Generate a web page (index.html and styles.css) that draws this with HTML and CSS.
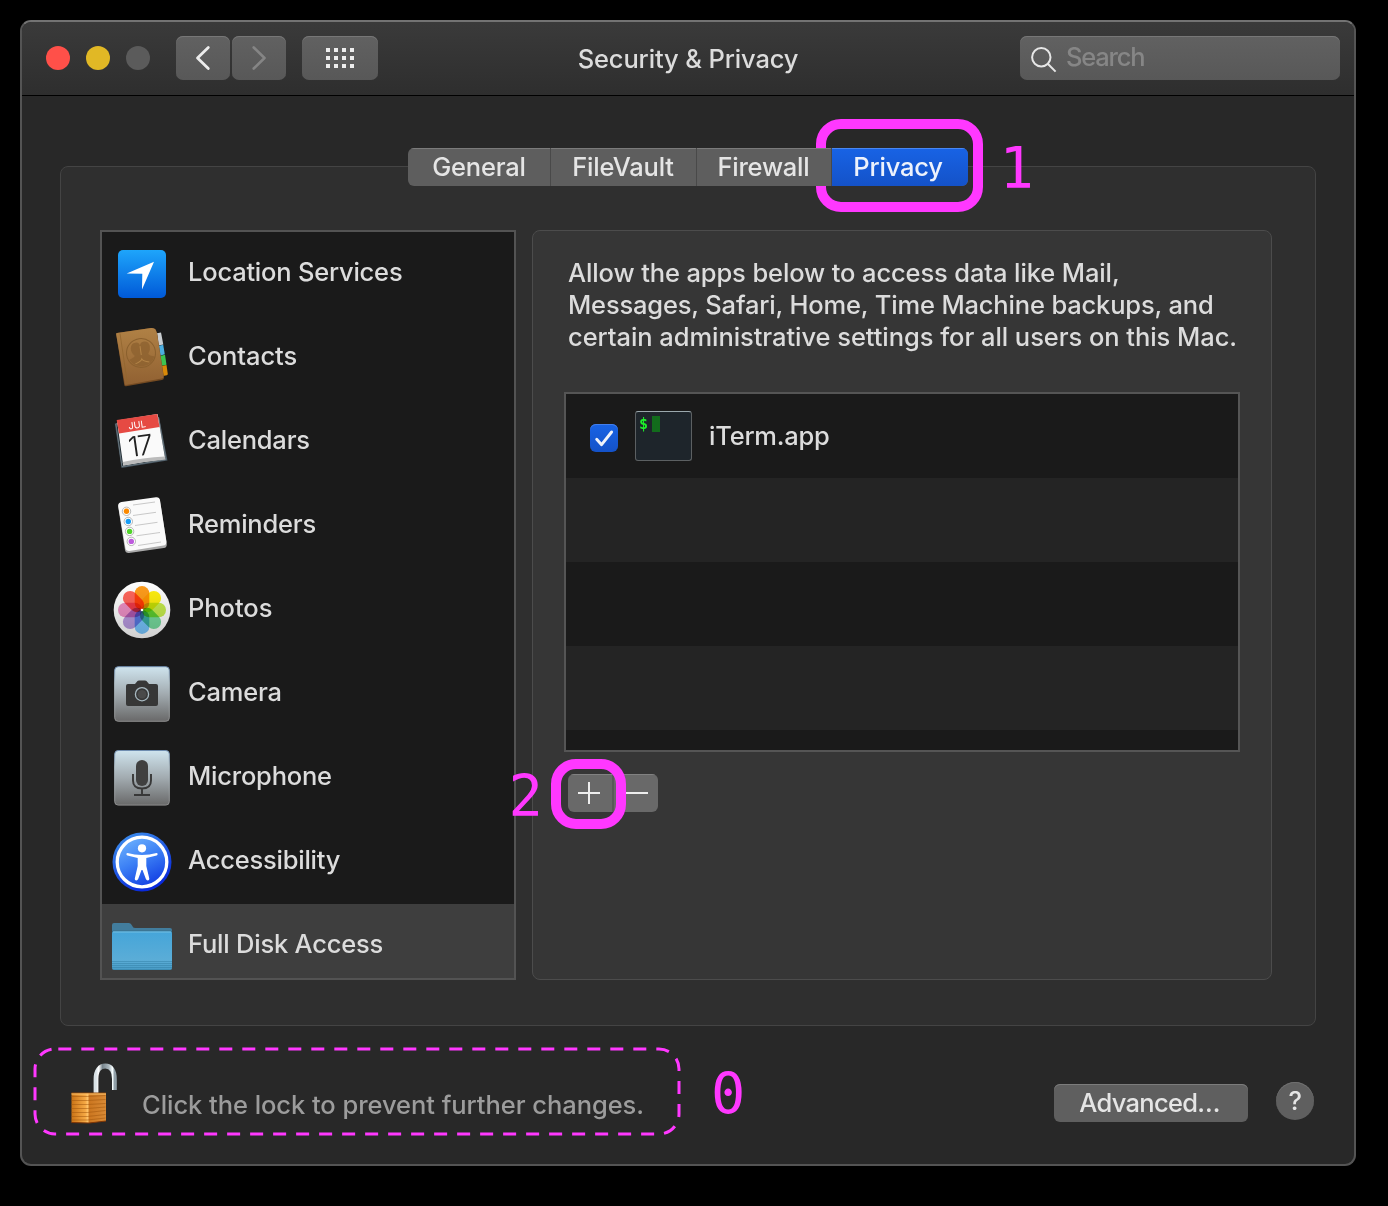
FILE: index.html
```html
<!DOCTYPE html>
<html lang="en">
<head>
<meta charset="utf-8">
<title>Security &amp; Privacy</title>
<link rel="stylesheet" href="styles.css">
</head>
<body>
<main class="window">
  <header class="toolbar">
    <div class="lights"><i class="light close"></i><i class="light minimize"></i><i class="light zoom"></i></div>
    <div class="nav">
      <button class="tool nav-button"><svg width="54" height="44" fill="none" stroke="#ececec" stroke-width="2.8" stroke-linecap="round" stroke-linejoin="round"><path d="M32.3 11.5 21.5 22l10.8 10.5"/></svg></button>
      <button class="tool nav-button"><svg width="54" height="44" fill="none" stroke="#858585" stroke-width="2.6" stroke-linecap="round" stroke-linejoin="round"><path d="M21.7 11.5 32.5 22 21.7 32.5"/></svg></button>
    </div>
    <button class="tool grid-button"><svg width="28" height="20" fill="#eee"><path d="M0 0h4v4H0zM8 0h4v4H8zM16 0h4v4h-4zM24 0h4v4h-4zM0 8h4v4H0zM8 8h4v4H8zM16 8h4v4h-4zM24 8h4v4h-4zM0 16h4v4H0zM8 16h4v4H8zM16 16h4v4h-4zM24 16h4v4h-4z"/></svg></button>
    <h1 class="title">Security &amp; Privacy</h1>
    <div class="tool search"><svg width="26" height="26" fill="none" stroke="#e6e6e6" stroke-width="2"><circle cx="10.3" cy="10.3" r="9.2"/><path d="M17 17l7.6 7.6"/></svg><span class="search-text">Search</span></div>
  </header>

  <section class="content">
    <nav class="tabs">
      <span class="tab general">General</span>
      <span class="tab filevault">FileVault</span>
      <span class="tab firewall">Firewall</span>
      <span class="tab privacy">Privacy</span>
    </nav>

    <div class="panel">
      <ul class="services">
        <li class="service">
          <svg class="icon" viewBox="0 0 60 60"><defs><linearGradient id="loc" x2="0" y2="1"><stop stop-color="#1ea5fb"/><stop offset="1" stop-color="#0059d8"/></linearGradient></defs><rect x="6" y="6" width="48" height="48" rx="5" fill="url(#loc)"/><path d="M42 17.7 14.7 29.4l15.6.4-.3 15.7z" fill="#fff"/></svg>
          <span class="label">Location Services</span></li>
        <li class="service">
          <svg class="icon" viewBox="0 0 60 60"><defs><linearGradient id="book" x2="0" y2="1"><stop stop-color="#b08145"/><stop offset="1" stop-color="#916132"/></linearGradient></defs><path d="M45 5.2 49 4.5l2.3 12-5 1z" fill="#c9cdd0"/><path d="M46 18l5.2-1.2 1.6 9.5-5 1.5z" fill="#4caee0"/><path d="M48 28l5-1.3 1.5 10-5 1z" fill="#3cc451"/><path d="M49.500 38l5-1L55.800 46q0 1-1 1.200L51 48z" fill="#d98908"/><path d="M5 5 39 .1q3.500-.4 4.800 1.700l1.200 3 7 44.700q0 2-2 2.500L14 58.200q-1.500.2-1.800-1.500L4.200 6.500Q4 5.200 5 5z" fill="#754b22"/><path d="M5 5 39 .1q3-.4 4.500 1.500l1.500 4 6.500 42.500q.2 2-2 2.500L14 57q-1 .2-1.300-1.500L4.200 6.500Q4 5.200 5 5z" fill="url(#book)"/><path d="M8 5.500 15.500 56" stroke="#92662f" stroke-width=".8"/><g transform="rotate(-8 29 25)" fill="#8d6130"><circle cx="29" cy="25" r="14.500" fill="none" stroke="#8a602e" stroke-width="1"/><path d="M16.500 30q5-1.500 6-3-3.500-4-3-8 .8-5 5.300-5 3.700 0 4.200 3.500.8-3.500 4.500-3.500 4.500 0 5.200 5 .4 4-2.700 8 1.200 2 6 3-3.500 7.500-12 8.200-9.500 0-13.500-8.200z" opacity=".8"/><path d="M22 35q6-1.500 7-4 1 2.500 7 4M29 18v9" fill="none" stroke="#b38447" stroke-width="1"/></g></svg>
          <span class="label loose">Contacts</span></li>
        <li class="service">
          <svg class="icon" viewBox="0 0 60 60"><path d="M2.800 11.500 47 4.800l8.500 43.700L9.500 56z" fill="#485762"/><path d="M4 12 46.500 5.500l7.500 42L10 54.600z" fill="#202b32" stroke="#76848c" stroke-width=".8"/><path d="M5 8.500 45.500 2l7.700 45q-20 2.500-42 6.500z" fill="#fafafa"/><path d="M10.700 50q20-4.500 42.200-5.500l.5 3q-21 2-42.100 6z" fill="#bbb"/><path d="M4.700 8 45.300 2l2.200 13L7 21.500z" fill="#e64a43"/><g transform="rotate(-8 30 30)"><text x="27.500" y="15.800" class="cal-month">JUL</text><text x="27.500" y="43.500" class="cal-day">17</text></g></svg>
          <span class="label">Calendars</span></li>
        <li class="service">
          <svg class="icon" viewBox="0 0 60 60"><path d="M9.500 6.800 44 2q3.500-.3 4 3l6.800 43q.2 3.300-3 4L17 57q-3.500.2-4-3L6.200 11q-.2-3.500 3.300-4.200z" fill="#aaa"/><path d="M9.500 6 44 1.200q3.500-.3 4 3l6.400 41.300q.2 3.300-3 4L17.400 55q-3.500.2-4-3L6.200 10q-.2-3.300 3.300-4z" fill="#fafafa"/><path d="m21 9 22-3M21 19.500l23-3.200M23 29.500l22.500-3.200M24.500 39.800 48 36.500M26 49.500 49 46" stroke="#bbb" stroke-width=".8"/><g fill="#fff" stroke="#888" stroke-width=".6"><circle cx="14.500" cy="15.300" r="4.200"/><circle cx="16.300" cy="25.500" r="4.200"/><circle cx="17.600" cy="35.400" r="4.200"/><circle cx="19.300" cy="45.400" r="4.200"/></g><circle cx="14.500" cy="15.300" r="2.700" fill="#fb8900"/><circle cx="16.300" cy="25.500" r="2.700" fill="#169cf5"/><circle cx="17.600" cy="35.400" r="2.700" fill="#50d42a"/><circle cx="19.300" cy="45.400" r="2.700" fill="#bd5bdd"/></svg>
          <span class="label">Reminders</span></li>
        <li class="service">
          <svg class="icon" viewBox="0 0 60 60"><defs><linearGradient id="disc" x2="0" y2="1"><stop stop-color="#fff"/><stop offset="1" stop-color="#d0d0d0"/></linearGradient></defs><circle cx="30" cy="30" r="28.300" fill="url(#disc)"/><g class="petals"><rect x="22.700" y="6" width="14.600" height="24" rx="7.300" fill="#ff9d1b"/><rect x="22.700" y="6" width="14.600" height="24" rx="7.300" fill="#fff010" transform="rotate(45 30 30)"/><rect x="22.700" y="6" width="14.600" height="24" rx="7.300" fill="#c6ec4c" transform="rotate(90 30 30)"/><rect x="22.700" y="6" width="14.600" height="24" rx="7.300" fill="#76dc9e" transform="rotate(135 30 30)"/><rect x="22.700" y="6" width="14.600" height="24" rx="7.300" fill="#78c6ff" transform="rotate(180 30 30)"/><rect x="22.700" y="6" width="14.600" height="24" rx="7.300" fill="#b99ae0" transform="rotate(225 30 30)"/><rect x="22.700" y="6" width="14.600" height="24" rx="7.300" fill="#ee90c6" transform="rotate(270 30 30)"/><rect x="22.700" y="6" width="14.600" height="24" rx="7.300" fill="#ff665c" transform="rotate(315 30 30)"/></g><circle cx="30" cy="30" r="1.300" fill="#fff"/></svg>
          <span class="label loose">Photos</span></li>
        <li class="service">
          <svg class="icon" viewBox="0 0 60 60"><defs><linearGradient id="steel" x2="0" y2="1"><stop stop-color="#cfe4ee"/><stop offset=".5" stop-color="#a2abb0"/><stop offset="1" stop-color="#696969"/></linearGradient><linearGradient id="rim" x2="0" y2="1"><stop stop-color="#6f8db0"/><stop offset=".3" stop-color="#b5c4cc"/><stop offset="1" stop-color="#8c8c8c"/></linearGradient></defs><rect x="2.700" y="2.700" width="54.600" height="54.600" rx="3.500" fill="url(#steel)" stroke="url(#rim)"/><path d="M16 20h7l2.500-3q.5-.6 1.500-.6h6q1 0 1.500.6l2.500 3h7q2 0 2 2v18q0 2-2 2H16q-2 0-2-2V22q0-2 2-2z" fill="#373737"/><circle cx="30" cy="30.200" r="6.600" fill="#393939" stroke="#a9bac2" stroke-width="1.300"/><circle cx="30" cy="30.200" r="4.300" fill="#4a4a4a"/></svg>
          <span class="label">Camera</span></li>
        <li class="service">
          <svg class="icon" viewBox="0 0 60 60"><rect x="2.700" y="2.500" width="54.600" height="54.600" rx="3.500" fill="url(#steel)" stroke="url(#rim)"/><rect x="24" y="12" width="12" height="26" rx="6" fill="#404040"/><path d="M21 26v6.500q0 8 9 8t9-8V26M30 41v5.500M22 47h16" fill="none" stroke="#383838" stroke-width="1.900"/></svg>
          <span class="label">Microphone</span></li>
        <li class="service">
          <svg class="icon" viewBox="0 0 60 60"><defs><linearGradient id="acc" x2=".5" y2="1"><stop stop-color="#76bbff"/><stop offset=".55" stop-color="#3c80f5"/><stop offset="1" stop-color="#1746e5"/></linearGradient><linearGradient id="accrim" x2=".5" y2="1"><stop stop-color="#4096ed"/><stop offset="1" stop-color="#0929db"/></linearGradient></defs><circle cx="30" cy="30" r="29.500" fill="url(#accrim)"/><circle cx="30" cy="30" r="24.800" fill="url(#acc)" stroke="#fff" stroke-width="3.300"/><circle cx="30" cy="16.300" r="4.100" fill="#fff"/><path d="M15.500 21q7 2 14.500 2t14.500-2q1.200 0 1.100 1.200 0 1-1 1.300L34.300 26v8l3 12.500q.2 1.700-1.200 2-1.600.2-2.200-1.400L30.500 38h-1L26.200 47.100q-.7 1.600-2.200 1.400-1.500-.3-1.200-2L25.700 34v-8l-10.300-2.500q-1-.3-1-1.300 0-1.200 1.100-1.200z" fill="#fff"/></svg>
          <span class="label">Accessibility</span></li>
        <li class="service selected">
          <svg class="icon" viewBox="0 0 60 60"><defs><linearGradient id="folder" x2="0" y2="1"><stop stop-color="#45a5d9"/><stop offset=".75" stop-color="#5badd7"/><stop offset="1" stop-color="#489bc5"/></linearGradient></defs><path d="M0 18V9q0-2 2-2h15q2 0 3 2.500t3 2.500h35q2 0 2 2v4z" fill="#427d9d"/><path d="M0 15.200h60" stroke="#326780"/><path d="M0 17.500q0-2 2-2h56q2 0 2 2V52q0 2-2 2H2q-2 0-2-2z" fill="url(#folder)"/><path d="M1 16h58" stroke="#74c0e4" stroke-width="1"/><path d="M0 45.500h60M0 47.500h60M0 49.500h60M0 51.500h60M1 53.500h58" stroke="#337fa5" stroke-width=".5"/></svg>
          <span class="label">Full Disk Access</span></li>
      </ul>

      <section class="detail">
        <p class="description"><span class="line d1">Allow the apps below to access data like Mail,</span><span class="line d2">Messages, Safari, Home, Time Machine backups, and</span><span class="line d3">certain administrative settings for all users on this Mac.</span></p>
        <div class="apps">
          <div class="app">
            <span class="checkbox"><svg width="28" height="28" fill="none" stroke="#f0f3fa" stroke-width="2.900" stroke-linecap="round" stroke-linejoin="round"><path d="m6.700 15.300 4.900 5.400L21.600 8"/></svg></span>
            <span class="terminal"><span class="prompt">$</span><span class="cursor"></span></span>
            <span class="app-name">iTerm.app</span>
          </div>
          <div class="app"></div><div class="app"></div><div class="app"></div><div class="app"></div>
        </div>
        <div class="edit">
          <button class="edit-button add"><svg width="22" height="22" stroke="#eee" stroke-width="2"><path d="M0 11h22M11 0v22"/></svg></button>
          <button class="edit-button remove"><svg width="22" height="22" stroke="#eee" stroke-width="2"><path d="M0 11h22"/></svg></button>
        </div>
      </section>
    </div>
  </section>

  <footer class="footer">
    <svg class="lock" width="48" height="62" viewBox="0 0 48 62"><defs><linearGradient id="brass"><stop stop-color="#c97316"/><stop offset=".4" stop-color="#f5a844"/><stop offset=".47" stop-color="#ffc36a"/><stop offset=".52" stop-color="#cc7720"/><stop offset="1" stop-color="#d98a35"/></linearGradient><linearGradient id="chrome"><stop stop-color="#d9e2e6"/><stop offset=".15" stop-color="#fff"/><stop offset=".35" stop-color="#77848c"/><stop offset=".7" stop-color="#a9b6bd"/><stop offset=".9" stop-color="#f8ffff"/><stop offset="1" stop-color="#91a0a8"/></linearGradient></defs><path d="M25 31V17C25 8 29 4 34.300 4S43.400 8 43.400 17v11" fill="none" stroke="url(#chrome)" stroke-width="4.800"/><path d="M.5 31H35v28L18 61 .5 60.500z" fill="url(#brass)"/><path d="M.5 34.500h16l18-1M.5 38.500h16l18-1M.5 42.500h16l18-1M.5 46.500h16l18-1.500M.5 50.500h16l18-2M.5 54.500h16l18-2M.5 58h16l18-2" fill="none" stroke="#a3570f" stroke-width="1" opacity=".55"/><path d="M.5 31H35" stroke="#8c460b"/><path d="M.5 32H35" stroke="#ffc56c"/><path d="M.5 60.500 18 61 35 59" fill="none" stroke="#803605"/></svg>
    <span class="lock-text">Click the lock to prevent further changes.</span>
    <button class="advanced">Advanced…</button>
    <button class="help">?</button>
  </footer>
</main>

<svg class="annotations" width="1388" height="1206" viewBox="0 0 1388 1206">
  <g fill="none" stroke="#ff38ff">
    <rect x="821" y="124" width="157" height="83" rx="20" stroke-width="10"/>
    <rect x="556" y="764" width="65" height="60" rx="20" stroke-width="10"/>
    <rect x="35" y="1049" width="644" height="85" rx="20" stroke-width="3" stroke-dasharray="13 10" stroke-dashoffset="-3.300"/>
  </g>
  <text x="999.500" y="187.500" class="step">1</text>
  <text x="508.500" y="815.500" class="step">2</text>
  <text x="711" y="1113.500" class="step">0</text>
</svg>
</body>
</html>
```
FILE: styles.css
```css
* { box-sizing: border-box; }
body {
  margin: 0;
  padding: 20px;
  height: 1206px;
  overflow: hidden;
  background: #000;
  color: #dcdcdc;
  font: 450 25.5px/32px Inter, "Liberation Sans", sans-serif;
  letter-spacing: -.22px;
}
button { margin: 0; padding: 0; border: 0; color: inherit; font: inherit; letter-spacing: inherit; }
svg { display: block; flex: none; }

.window {
  display: flex;
  flex-direction: column;
  width: 1336px;
  height: 1146px;
  border: 2px solid #545454;
  border-top-color: #737373;
  border-radius: 11px;
  background: #282828;
  overflow: hidden;
}

/* Toolbar */
.toolbar {
  display: flex;
  align-items: flex-start;
  flex: none;
  height: 74px;
  padding: 14px 14px 0 24px;
  border-bottom: 1px solid #000;
  background: linear-gradient(#3a3a3a, #2e2e2e);
}
.lights { display: flex; gap: 16px; padding-top: 10px; margin-right: 26px; }
.light { width: 24px; height: 24px; border-radius: 50%; }
.close { background: #ff5049; }
.minimize { background: #e1b825; }
.zoom { background: #5b5b5b; }
.nav { display: flex; gap: 2px; margin-right: 16px; }
.tool {
  display: flex;
  align-items: center;
  justify-content: center;
  height: 44px;
  border-radius: 7px;
  background: linear-gradient(#616161, #585858);
  box-shadow: inset 0 1px #777;
}
.nav-button { width: 54px; }
.grid-button { width: 76px; }
.title {
  flex: 1;
  margin: 7px 0 0;
  padding-right: 22px;
  text-align: center;
  font-size: 25.5px;
  line-height: 32px;
  font-weight: 450;
  letter-spacing: -.13px;
}
.search { width: 320px; justify-content: flex-start; padding: 3px 0 0 11px; gap: 9px; }
.search-text { color: #868686; padding-bottom: 5px; letter-spacing: -1.2px; }

/* Tabs over the panel edge */
.content { display: flex; flex-direction: column; padding: 52px 38px 0; }
.tabs {
  display: flex;
  position: relative;
  z-index: 1;
  align-self: center;
  width: 560px;
  height: 38px;
  border-radius: 6px;
  overflow: hidden;
  background: #5e5e5e;
}
.tab {
  text-align: center;
  line-height: 38px;
  border-right: 1px solid #494949;
  box-shadow: inset 0 1px #7b7b7b;
  color: #e5e5e5;
}
.general { width: 143px; }
.filevault { width: 146px; padding-right: 1px; }
.firewall { width: 135px; padding-right: 1px; }
.privacy { flex: 1; padding-right: 4px; border: 0; color: #edf2fc; background: linear-gradient(#1863e5, #1452c8); box-shadow: inset 0 1px #4987f2; }

.panel {
  display: flex;
  gap: 16px;
  width: 1256px;
  height: 860px;
  margin-top: -20px;
  padding: 63px 43px 0 39px;
  border: 1px solid #444;
  border-radius: 8px;
  background: #2f2f2f;
}
.services {
  flex: none;
  width: 416px;
  height: 750px;
  margin: 0;
  padding: 0;
  border: 2px solid #535353;
  background: #1a1a1a;
  list-style: none;
  overflow: hidden;
}
.service { display: flex; align-items: center; gap: 16px; height: 84px; padding-left: 10px; }
.selected { background: #3e3e3e; }
.icon { width: 60px; height: 60px; }
.label { padding-bottom: 4px; }
.loose { letter-spacing: -.06px; }
.cal-month { font: 9.500px Inter, sans-serif; letter-spacing: 0; fill: #fff; text-anchor: middle; }
.cal-day { font: 300 28px Inter, sans-serif; letter-spacing: -1.500px; fill: #222; text-anchor: middle; }
.petals rect { mix-blend-mode: multiply; }

/* Detail pane */
.detail {
  flex: none;
  width: 740px;
  height: 750px;
  padding: 26px 31px 0;
  border: 1px solid #4c4c4c;
  border-radius: 8px;
  background: #363636;
}
.description { margin: 0 0 39px; padding-left: 4px; white-space: nowrap; }
.line { display: block; }
.d1 { letter-spacing: -.12px; }
.d2 { letter-spacing: -.17px; }
.d3 { letter-spacing: -.06px; }
.apps { height: 360px; border: 2px solid #555; overflow: hidden; }
.app { display: flex; align-items: center; height: 84px; padding-left: 24px; background: #1a1a1a; }
.app:nth-child(even) { background: #242424; }
.checkbox { margin: 4px 17px 0 0; border-radius: 6px; background: linear-gradient(#1863e5, #1452c8); box-shadow: inset 0 1px #437fec; }
.terminal {
  display: flex;
  gap: 3px;
  width: 57px;
  height: 50px;
  padding: 4px 0 0 3px;
  margin-right: 17px;
  border: 1px solid #5c6062;
  border-top-color: #9ba8ad;
  border-radius: 3px;
  background: #1e252b;
}
.prompt { width: 10px; color: #1df02a; font: 700 15px/17px "DejaVu Sans Mono", monospace; letter-spacing: 0; }
.cursor { width: 8px; height: 16px; background: #126c1c; }
.edit { display: flex; width: 90px; height: 38px; margin: 22px 0 0 4px; border-radius: 6px; overflow: hidden; }
.edit-button { display: flex; align-items: center; justify-content: center; background: #696969; box-shadow: inset 0 1px #818181; }
.add { width: 46px; padding-right: 2px; border-right: 2px solid #595959; }
.remove { flex: 1; padding-left: 2px; }

/* Footer */
.footer { display: flex; align-items: flex-start; padding: 36px 40px 0 49px; }
.lock { margin-right: 23px; }
.lock-text { flex: 1; padding-top: 27px; color: #9c9c9c; letter-spacing: -.05px; }
.advanced { width: 194px; height: 38px; margin: 22px 28px 0 0; padding-right: 3px; border-radius: 6px; background: #5f5f5f; box-shadow: inset 0 1px #7c7c7c; color: #e5e5e5; letter-spacing: -.7px; }
.help { width: 38px; height: 38px; margin-top: 20px; border-radius: 50%; background: #5f5f5f; box-shadow: inset 0 1px #707070; color: #e5e5e5; }

/* Numbered markers drawn over the window */
.annotations { position: absolute; top: 0; left: 0; pointer-events: none; }
.step { font: 57px "DejaVu Sans Mono", monospace; letter-spacing: 0; fill: #ff38ff; }
```
